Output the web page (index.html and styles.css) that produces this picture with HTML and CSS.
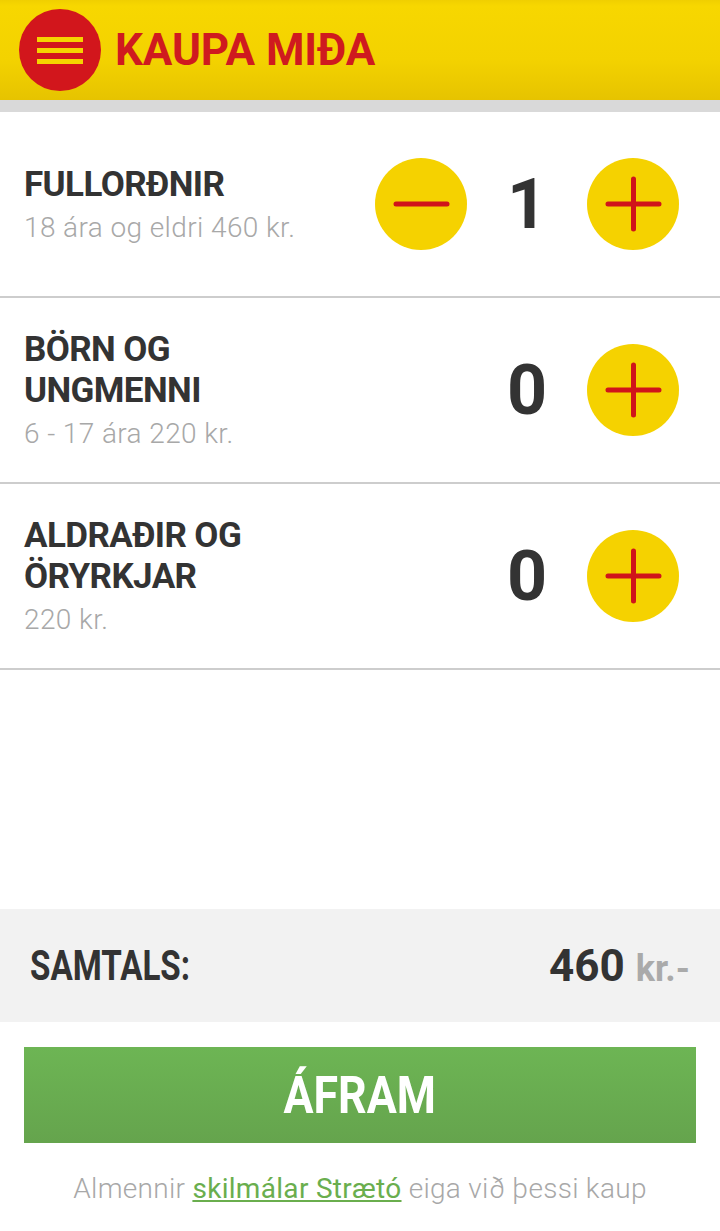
FILE: index.html
```html
<!DOCTYPE html>
<html>
<head>
<meta charset="utf-8">
<title>Kaupa miða</title>
<link rel="stylesheet" href="styles.css">
</head>
<body>
<div class="page">
    <header class="topbar">
        <button class="menu-btn" aria-label="Valmynd">
            <span></span><span></span><span></span>
        </button>
        <h1>KAUPA MIÐA</h1>
    </header>

    <ul class="tickets">
        <li class="ticket">
            <div class="info">
                <h2>FULLORÐNIR</h2>
                <p>18 ára og eldri 460 kr.</p>
            </div>
            <div class="counter">
                <button class="round">
                    <svg viewBox="0 0 92 92"><path d="M21 46H72"/></svg>
                </button>
                <span class="count">1</span>
                <button class="round">
                    <svg viewBox="0 0 92 92"><path d="M21 46H72M46.5 21V71"/></svg>
                </button>
            </div>
        </li>
        <li class="ticket">
            <div class="info">
                <h2>BÖRN OG<br>UNGMENNI</h2>
                <p>6 - 17 ára 220 kr.</p>
            </div>
            <div class="counter">
                <span class="count">0</span>
                <button class="round">
                    <svg viewBox="0 0 92 92"><path d="M21 46H72M46.5 21V71"/></svg>
                </button>
            </div>
        </li>
        <li class="ticket">
            <div class="info">
                <h2>ALDRAÐIR OG<br>ÖRYRKJAR</h2>
                <p>220 kr.</p>
            </div>
            <div class="counter">
                <span class="count">0</span>
                <button class="round">
                    <svg viewBox="0 0 92 92"><path d="M21 46H72M46.5 21V71"/></svg>
                </button>
            </div>
        </li>
    </ul>

    <div class="spacer"></div>

    <div class="total">
        <span class="label">SAMTALS:</span>
        <span class="sum">460 <small>kr.-</small></span>
    </div>

    <a class="next" href="#"><span>ÁFRAM</span></a>

    <p class="terms">Almennir <a href="#">skilmálar Strætó</a> eiga við þessi kaup</p>
</div>
</body>
</html>
```

FILE: styles.css
```css
* {
    box-sizing: border-box;
}

body {
    margin: 0;
    font-family: Roboto, "Liberation Sans", sans-serif;
    color: #333;
    background: #fff;
}

.page {
    min-height: 100vh;
    display: flex;
    flex-direction: column;
}

/* header */
.topbar {
    height: 112px;
    display: flex;
    align-items: center;
    padding: 0 0 12px 19px;
    background: linear-gradient(#f0cf00 0, #f7d700 6px, #f3d200 60px, #e6c300 100px, #d9d9d9 100px);
}

.menu-btn {
    width: 82px;
    height: 82px;
    border: 0;
    border-radius: 50%;
    background: #d2161c;
    display: flex;
    flex-direction: column;
    justify-content: center;
    align-items: center;
    gap: 6px;
    padding: 0;
}

.menu-btn span {
    display: block;
    width: 46px;
    height: 5px;
    background: #f5d400;
}

.topbar h1 {
    margin: 0 0 0 14px;
    font-size: 44px;
    font-weight: 700;
    color: #cf1a1f;
    letter-spacing: -0.1px;
}

/* ticket rows */
.tickets {
    list-style: none;
    margin: 0;
    padding: 0;
}

.ticket {
    height: 186px;
    display: flex;
    align-items: center;
    justify-content: space-between;
    padding: 0 41px 0 24px;
    border-bottom: 2px solid #cdcdcd;
}

.info h2 {
    margin: 0;
    font-size: 35px;
    line-height: 41px;
    font-weight: 700;
    color: #333;
    letter-spacing: -0.6px;
}

.info p {
    margin: 6px 0 0;
    font-size: 28px;
    line-height: 34px;
    font-weight: 300;
    color: #a8a8a8;
    letter-spacing: 0.4px;
}

.counter {
    display: flex;
    align-items: center;
}

.round {
    width: 92px;
    height: 92px;
    border: 0;
    padding: 0;
    border-radius: 50%;
    background: #f5d200;
}

.round svg {
    display: block;
    width: 92px;
    height: 92px;
    fill: none;
    stroke: #d0141a;
    stroke-width: 5;
    stroke-linecap: round;
}

.count {
    width: 120px;
    text-align: center;
    font-size: 70px;
    font-weight: 700;
    color: #333;
}

.spacer {
    flex: 1;
}

/* total */
.total {
    height: 113px;
    display: flex;
    align-items: center;
    justify-content: space-between;
    padding: 0 30px;
    background: #f2f2f2;
}

.total .label {
    display: inline-block;
    font-size: 42px;
    font-weight: 700;
    color: #333;
    transform: scaleX(0.79);
    transform-origin: left center;
}

.total .sum {
    font-size: 44px;
    font-weight: 700;
    color: #333;
}

.total .sum small {
    font-size: 36px;
    color: #aaa;
}

/* button */
.next {
    display: flex;
    align-items: center;
    justify-content: center;
    height: 96px;
    margin: 25px 24px 0;
    background: linear-gradient(#6db554, #65a44d);
    color: #fff;
    text-decoration: none;
    font-size: 52px;
    font-weight: 700;
}

.next span {
    display: inline-block;
    transform: scaleX(0.86);
}

.terms {
    margin: 28px 0 24px;
    text-align: center;
    font-size: 28px;
    line-height: 36px;
    font-weight: 300;
    color: #a8a8a8;
    letter-spacing: 0.3px;
}

.terms a {
    color: #6aae4e;
    font-weight: 400;
}
```
